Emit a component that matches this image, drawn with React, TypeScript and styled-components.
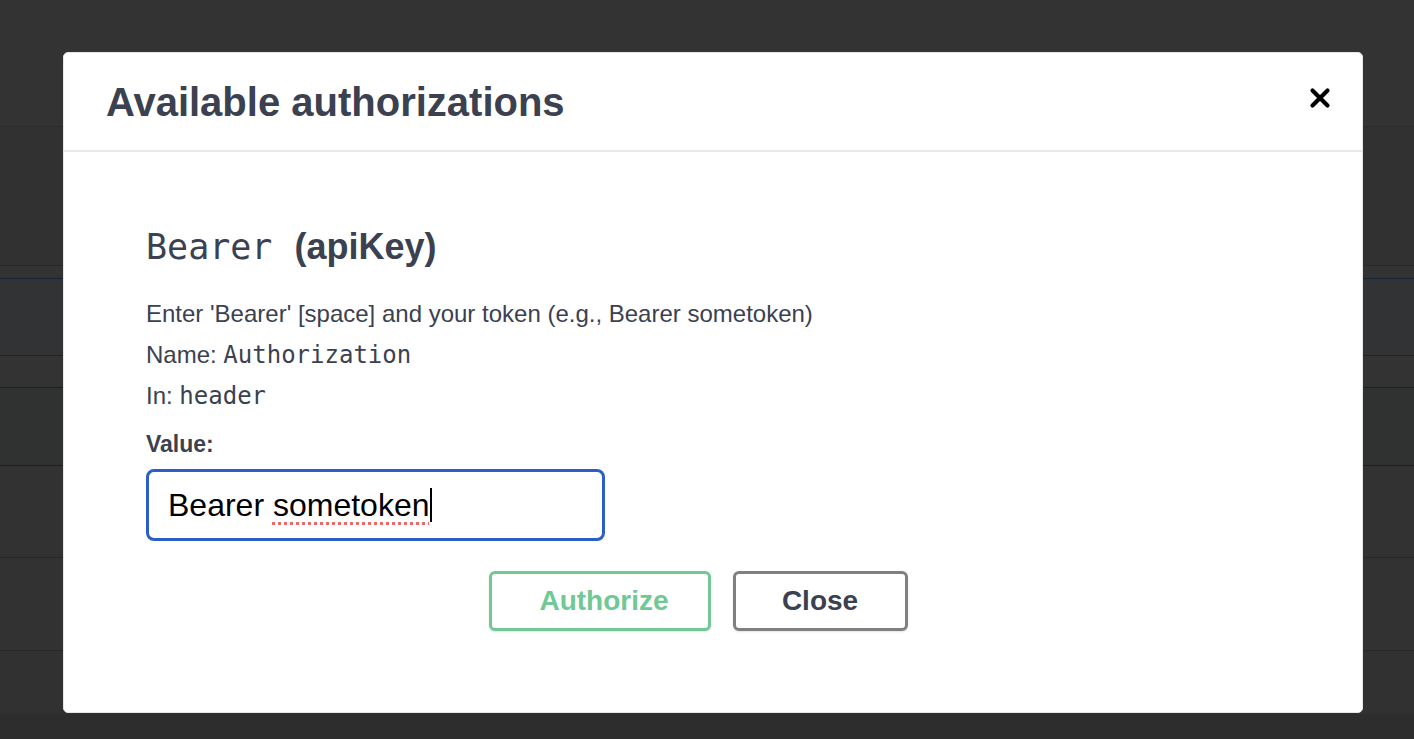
import React, { FC } from 'react';
import styled, { createGlobalStyle } from 'styled-components';

const GlobalStyle = createGlobalStyle`
  html, body {
    margin: 0;
    padding: 0;
    background: #333333;
    overflow: hidden;
  }
  * {
    box-sizing: border-box;
  }
`;

const sans = `"Liberation Sans", Arial, Helvetica, sans-serif`;
const mono = `"DejaVu Sans Mono", "Liberation Mono", monospace`;

// dimmed page behind the dialog
const PageStyled = styled.div`
  display: flex;
  flex-direction: column;
  height: 739px;
  background: #333333;
`;

const BandStyled = styled.div<{ $height: number; $bg?: string; $line?: string; $top?: string }>`
  flex: 0 0 ${(p) => p.$height}px;
  background: ${(p) => p.$bg || '#333333'};
  border-bottom: ${(p) => (p.$line ? `1px solid ${p.$line}` : 'none')};
  border-top: ${(p) => (p.$top ? `1px solid ${p.$top}` : 'none')};
`;

const FooterBandStyled = styled.div`
  flex: 1;
  background: #2d2d2d;
`;

const OverlayStyled = styled.div`
  position: fixed;
  inset: 0;
  display: flex;
  align-items: flex-start;
  padding: 52px 0 0 63px;
`;

const ModalStyled = styled.div`
  width: 1300px;
  background: #ffffff;
  border: 1px solid #e6e6e6;
  border-radius: 5px;
  font-family: ${sans};
  color: #3b4151;
`;

const HeaderStyled = styled.div`
  display: flex;
  align-items: center;
  justify-content: space-between;
  height: 99px;
  padding: 0 31px 0 42px;
  border-bottom: 2px solid #e8e8e8;
`;

const TitleStyled = styled.h3`
  margin: 0;
  font-size: 40px;
  line-height: 48px;
  font-weight: 700;
  color: #3b4151;
`;

const CloseIconStyled = styled.button`
  display: flex;
  padding: 0;
  border: none;
  background: none;
  cursor: pointer;
  margin-top: -8px;
`;

const BodyStyled = styled.div`
  padding: 73px 82px 81px 82px;
`;

const SchemeTitleStyled = styled.h4`
  margin: 0 0 30px;
  font-size: 36px;
  line-height: 44px;
  font-weight: 700;
  color: #3b4151;
  white-space: nowrap;
`;

const CodeStyled = styled.code<{ $size: number }>`
  font-family: ${mono};
  font-weight: 400;
  font-size: ${(p) => p.$size}px;
  color: #3b4151;
`;

const SchemeNameStyled = styled(CodeStyled)`
  margin-right: 22px;
`;

const LineStyled = styled.p`
  margin: 0 0 11px;
  font-size: 24px;
  line-height: 30px;
  white-space: nowrap;
`;

const LabelStyled = styled.label`
  display: block;
  margin: 18px 0 10px;
  font-size: 23px;
  line-height: 30px;
  font-weight: 700;
`;

const FieldStyled = styled.div`
  display: flex;
  align-items: center;
  width: 459px;
  height: 72px;
  padding: 0 19px;
  border: 3px solid #2c5fc6;
  border-radius: 8px;
  font-family: ${sans};
  font-size: 32px;
  color: #000000;
  white-space: nowrap;
`;

const MisspeltStyled = styled.span`
  text-decoration: underline dotted #ee6a6a;
  text-decoration-thickness: 3px;
  text-underline-offset: 6px;
`;

const CaretStyled = styled.span`
  display: inline-block;
  width: 2px;
  height: 34px;
  margin-left: 1px;
  background: #000000;
`;

const ButtonRowStyled = styled.div`
  display: flex;
  justify-content: center;
  gap: 22px;
  margin-top: 30px;
  padding-right: 30px;
  margin-left: -82px;
  margin-right: -82px;
`;

const ButtonStyled = styled.button<{ $tone: 'green' | 'gray'; $width: number }>`
  width: ${(p) => p.$width}px;
  height: 60px;
  padding: 0 0 0 ${(p) => (p.$tone === 'green' ? 9 : 0)}px;
  border: 3px solid ${(p) => (p.$tone === 'green' ? '#70c995' : '#808080')};
  border-radius: 6px;
  background: #ffffff;
  box-shadow: 0 1px 2px rgba(0, 0, 0, 0.12);
  font-family: ${sans};
  font-size: 28px;
  font-weight: 700;
  color: ${(p) => (p.$tone === 'green' ? '#70c995' : '#3b4151')};
  cursor: pointer;
`;

const BackgroundPage: FC = () => (
  <PageStyled>
    <BandStyled $height={127} $bg="#333333" $line="#2b2b2b" />
    <BandStyled $height={139} $bg="#313131" $line="#29292a" />
    <BandStyled $height={12} />
    <BandStyled $height={78} $bg="#323334" $top="#152436" $line="#152436" />
    <BandStyled $height={31} />
    <BandStyled $height={79} $bg="#2f3231" $top="#10291d" $line="#10291d" />
    <BandStyled $height={92} $bg="#323232" $line="#282829" />
    <BandStyled $height={93} $bg="#323232" $line="#282829" />
    <BandStyled $height={63} $bg="#313131" />
    <FooterBandStyled />
  </PageStyled>
);

export default function App() {
  return (
    <>
      <GlobalStyle />
      <BackgroundPage />
      <OverlayStyled>
        <ModalStyled role="dialog">
          <HeaderStyled>
            <TitleStyled>Available authorizations</TitleStyled>
            <CloseIconStyled aria-label="Close">
              <svg width="22" height="22" viewBox="0 0 22 22">
                <path d="M3.5 3.5 L18.5 18.5 M18.5 3.5 L3.5 18.5" stroke="#000" strokeWidth="4.2" strokeLinecap="round" />
              </svg>
            </CloseIconStyled>
          </HeaderStyled>
          <BodyStyled>
            <SchemeTitleStyled>
              <SchemeNameStyled $size={35}>Bearer</SchemeNameStyled>(apiKey)
            </SchemeTitleStyled>
            <LineStyled>Enter 'Bearer' [space] and your token (e.g., Bearer sometoken)</LineStyled>
            <LineStyled>
              Name: <CodeStyled $size={24}>Authorization</CodeStyled>
            </LineStyled>
            <LineStyled>
              In: <CodeStyled $size={24}>header</CodeStyled>
            </LineStyled>
            <LabelStyled>Value:</LabelStyled>
            <FieldStyled role="textbox">
              Bearer&nbsp;<MisspeltStyled>sometoken</MisspeltStyled>
              <CaretStyled />
            </FieldStyled>
            <ButtonRowStyled>
              <ButtonStyled $tone="green" $width={222}>Authorize</ButtonStyled>
              <ButtonStyled $tone="gray" $width={175}>Close</ButtonStyled>
            </ButtonRowStyled>
          </BodyStyled>
        </ModalStyled>
      </OverlayStyled>
    </>
  );
}
